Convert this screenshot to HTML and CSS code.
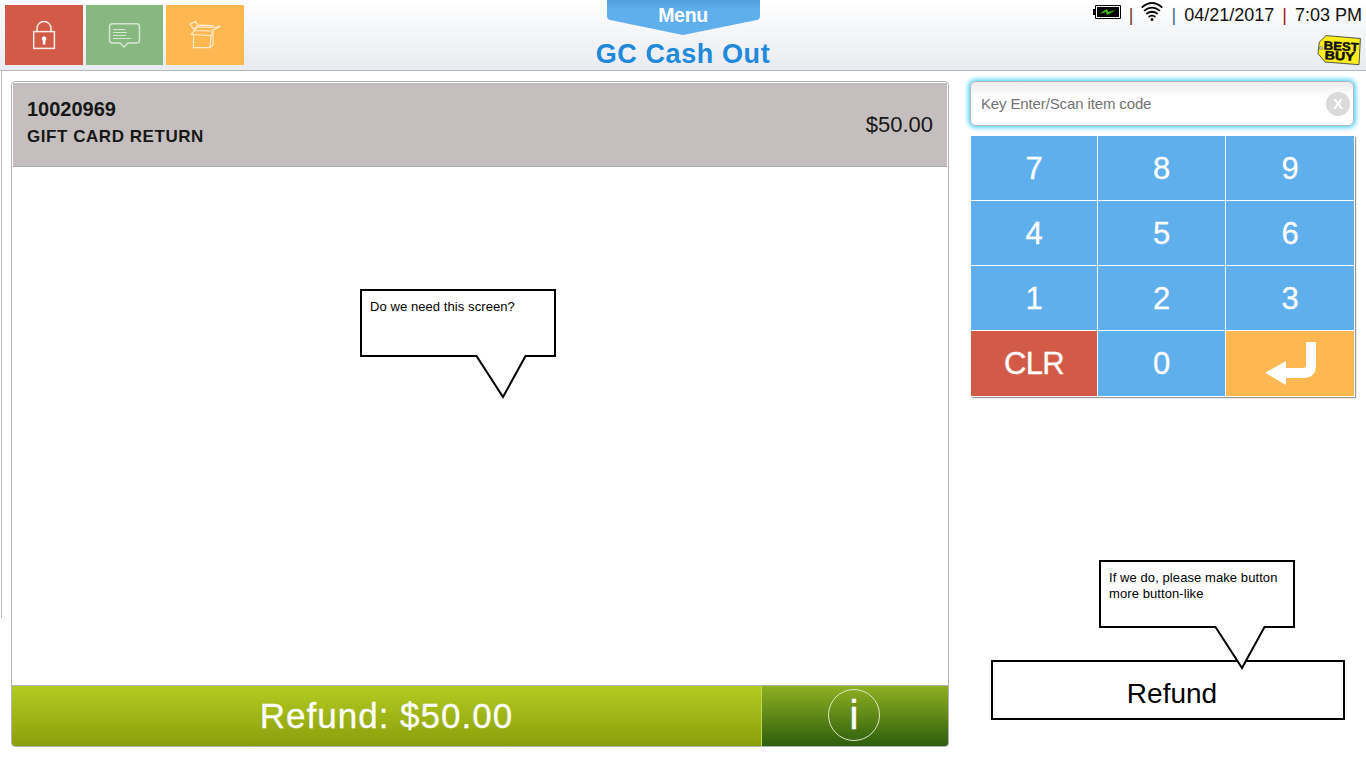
FILE: index.html
```html
<!DOCTYPE html>
<html lang="en">
<head>
<meta charset="utf-8">
<title>GC Cash Out</title>
<link rel="stylesheet" href="styles.css">
</head>
<body>
<header class="topbar">
  <nav class="tools">
    <button class="tool tool-lock" aria-label="Lock"><svg width="78" height="60" fill="none" stroke="#fff" stroke-opacity=".88"><rect x="28.700" y="26.600" width="20.700" height="16.800" stroke-width="1.500"/><path d="M32 26v-2.500a7 7 0 0 1 14 0V26" stroke-width="1.500"/><path d="M39 31.200a2.600 2.600 0 0 1 1.400 4.600V39.500h-2.600v-3.700a2.600 2.600 0 0 1 1.200-4.600z" fill="#fff" stroke="none"/></svg></button>
    <button class="tool tool-chat" aria-label="Messages"><svg width="77" height="60" fill="none" stroke="#fff" stroke-opacity=".65"><path d="M26.500 18.700h24q3 0 3 3V35q0 3-3 3H42l-4 4-4-4h-7.500q-3 0-3-3V21.700q0-3 3-3z" stroke-width="1.500"/><path d="M27 24.500h12M27 27.500h14M27 30.500h13M27 33.500h18"/></svg></button>
    <button class="tool tool-box" aria-label="Orders"><svg width="78" height="60" fill="none" stroke="#fff" stroke-opacity=".72" stroke-width="1.200"><path d="M27.700 30.500L27.300 42.700H44L47 40V24.500M44 42.700l1-12M25 29.500l3.500-4L46 26M25 29.500l20 1.200L47.500 24.500M24 19.300l5.500-3L32 21l-4.500 3zM28 25l5.500-4.800L48 20.700M33 22.200h14M47.500 25l6.800-3.700M47 23l7.500-2.200"/></svg></button>
  </nav>
  <div class="heading">
    <div class="menu"><svg class="menu-shape" width="153" height="35"><defs><linearGradient id="tab" x2="0" y2="1"><stop offset="0" stop-color="#539fde"/><stop offset=".28" stop-color="#60afed"/></linearGradient></defs><path d="M0 0h153v16q0 3-3 4L76 35 3 20q-3-1-3-4z" fill="url(#tab)"/></svg><span class="menu-label">Menu</span></div>
    <h1 class="title">GC Cash Out</h1>
  </div>
  <div class="status">
    <div class="status-line">
      <svg class="battery" width="28" height="14"><path d="M2.500.5h25v13h-25z" fill="#fff" stroke="#000"/><path d="M4 2h22v10H4zM0 4h3v6H0z"/><path d="M6 9l8-5 1 3 8-2-9 5-1-3z" fill="#4cc417"/></svg>
      <span class="bar bar-brown">|</span>
      <svg class="wifi" width="22" height="20" fill="none" stroke="#000" stroke-width="1.700"><path d="M.7 5.500q10.300-9 20.600 0M3 8.800q8-6.500 16 0M5.300 12q5.700-4.500 11.400 0M7.500 15q3.500-2.700 7 0"/><circle cx="11" cy="17.500" r="1.500" fill="#000" stroke="none"/></svg>
      <span class="bar bar-blue">|</span>
      <span class="date">04/21/2017</span>
      <span class="bar bar-red">|</span>
      <span class="time">7:03 PM</span>
    </div>
    <svg class="logo" width="44" height="31"><path d="M9 .6L43.400 3.500 42 29.700 8 27 1 18.500 2.300 7z" fill="#f9ed1c" stroke="#444" stroke-width=".9"/><circle cx="4" cy="13" r="1.400" fill="#fff" stroke="#555" stroke-width=".7"/><g class="logo-text" transform="rotate(3 24 15)"><text x="6.500" y="15.500" textLength="35" lengthAdjust="spacingAndGlyphs">BEST</text><text x="8" y="25" textLength="30" lengthAdjust="spacingAndGlyphs">BUY</text></g></svg>
  </div>
</header>
<main class="content">
  <section class="ticket">
    <div class="item">
      <div class="item-info"><div class="item-code">10020969</div><div class="item-name">GIFT CARD RETURN</div></div>
      <div class="item-price">$50.00</div>
    </div>
    <div class="ticket-body"></div>
    <footer class="total">
      <div class="total-label"><span>Refund: $50.00</span></div>
      <button class="info" aria-label="Information"><span class="info-ring">i</span></button>
    </footer>
  </section>
  <aside class="side">
    <div class="entry"><span class="entry-hint">Key Enter/Scan item code</span><span class="entry-clear">X</span></div>
    <div class="keypad">
      <button class="key">7</button><button class="key">8</button><button class="key">9</button>
      <button class="key">4</button><button class="key">5</button><button class="key">6</button>
      <button class="key">1</button><button class="key">2</button><button class="key">3</button>
      <button class="key key-clear">CLR</button><button class="key key-zero">0</button>
      <button class="key key-enter" aria-label="Enter"><svg width="51" height="43"><path d="M41 0h10v23q0 13-13 13H21v7L0 30.800 21 19v7h17q3 0 3-3z" fill="#fff"/></svg></button>
    </div>
    <button class="refund">Refund</button>
  </aside>
</main>
<div class="note note-screen"><svg class="note-shape" width="198" height="112"><path d="M1 1h194v66h-29.500L143 108l-26.500-41H1z"/></svg><p class="note-text">Do we need this screen?</p></div>
<div class="note note-button"><svg class="note-shape" width="198" height="112"><path d="M1 1h194v66h-29.500L143 108l-26.500-41H1z"/></svg><p class="note-text">If we do, please make button more button-like</p></div>
</body>
</html>
```
FILE: styles.css
```css
* { box-sizing: border-box; }
body { margin: 0; width: 1366px; height: 768px; overflow: hidden; position: relative; background: #fff; color: #111; font-family: "Liberation Sans", Arial, sans-serif; }
button { border: 0; padding: 0; margin: 0; font: inherit; color: inherit; }
svg { display: block; }
.topbar { height: 71px; display: grid; grid-template-columns: 1fr 174px 1fr; background: linear-gradient(#fff, #e8ebef); border-bottom: 1px solid #b4b9c0; }
.tools { display: flex; gap: 3px; padding: 5px; }
.tool { height: 60px; }
.tool-lock { background: #d15b47; }
.tool-chat { background: #87b87f; }
.tool-box { background: #ffb752; }
.heading { display: flex; flex-direction: column; align-items: center; }
.menu { display: grid; width: 153px; height: 35px; }
.menu-shape, .menu-label { grid-area: 1 / 1; }
.menu-label { color: #fff; font-size: 19.5px; line-height: 30px; letter-spacing: -.3px; font-weight: bold; text-align: center; }
.title { margin: 3px 0 0; font-size: 27px; line-height: 33px; letter-spacing: .6px; color: #2089da; white-space: nowrap; }
.status { display: flex; flex-direction: column; align-items: flex-end; padding: 0 4px 0 0; }
.status-line { display: flex; align-items: flex-start; height: 35px; font-size: 18px; line-height: 30px; white-space: nowrap; }
.battery { margin: 5px 8px 0 0; }
.wifi { margin: 2px 8px 0 8px; }
.bar-brown { color: #6b3a16; }
.bar-blue { color: #356d91; }
.bar-red { color: #9c1717; }
.date { margin: 0 8px 0 8px; }
.time { margin-left: 8px; }
.logo { margin-right: 1px; }
.logo-text { font-size: 12px; font-weight: bold; fill: #111; stroke: #111; stroke-width: .5px; }
.content { display: flex; border-left: 1px solid #b4b9c0; margin-left: 1px; height: 547px; }
.ticket { flex: none; width: 938px; height: 666px; margin: 10px 0 0 9px; display: flex; flex-direction: column; border: 1px solid #b3b3b3; border-radius: 4px; overflow: hidden; }
.item { height: 84px; margin: 1px 1px 0; display: flex; justify-content: space-between; background: #c4bfbe; border-bottom: 1px solid #aaa; padding: 0 14px; color: #171717; }
.item-info { padding-top: 13px; font-weight: bold; }
.item-code { font-size: 20px; line-height: 27px; }
.item-name { font-size: 17px; line-height: 27px; letter-spacing: .55px; }
.item-price { font-size: 22px; line-height: 84px; }
.ticket-body { flex: 1; }
.total { height: 61px; display: flex; border-top: 1px solid #b3b3b3; color: #fff; }
.total-label { width: 750px; background: linear-gradient(#b3cc22, #8a9e0b); border-right: 1px solid #b9dc50; text-align: center; font-size: 35px; line-height: 60px; letter-spacing: 1px; -webkit-text-stroke: .3px #fff; }
.info { flex: 1; display: flex; justify-content: center; align-items: center; padding: 0 2px 2px 0; background: linear-gradient(#8fb022, #2d5e0c); }
.info-ring { width: 52px; height: 52px; border: 1px solid #dce8c8; border-radius: 50%; font-size: 40px; line-height: 50px; -webkit-text-stroke: .5px #fff; }
.side { display: flex; flex-direction: column; padding: 10px 0 0 21px; }
.entry { flex: none; width: 384px; height: 45px; display: flex; align-items: center; justify-content: space-between; padding: 0 3px 0 10px; border: 1px solid #b5b5b5; border-radius: 6px; background: linear-gradient(#ececec, #fff 35%); box-shadow: 0 0 4px 1.5px #5ad6ff; }
.entry-hint { font-size: 15px; letter-spacing: -.13px; color: #737373; }
.entry-clear { width: 24px; height: 24px; border-radius: 50%; background: #dadada; color: #fff; font-weight: bold; font-size: 15px; line-height: 24px; text-align: center; }
.keypad { flex: none; width: 384px; height: 261px; margin: 10px 0 0 1px; display: grid; grid-template-columns: 126px 127px 128px; grid-template-rows: 64px 64px 64px 65px; gap: 1px; background: #fff; box-shadow: 1px 1px 1px #999; }
.key { padding-top: 2px; background: #60afed; color: #fff; font-size: 31px; -webkit-text-stroke: .3px #fff; }
.key-clear { padding-top: 0; background: #d15b47; letter-spacing: -.6px; }
.key-zero { padding-top: 0; }
.key-enter { padding-top: 0; background: #ffb752; display: flex; align-items: center; justify-content: center; }
.refund { flex: none; width: 354px; height: 60px; margin: 263px 0 0 21px; border: 2px solid #000; background: #fff; font-size: 28px; padding: 8px 0 0 8px; color: #000; }
.note { position: absolute; width: 196px; height: 112px; display: grid; }
.note-screen { left: 360px; top: 289px; }
.note-button { left: 1099px; top: 560px; }
.note-shape, .note-text { grid-area: 1 / 1; }
.note-shape path { fill: #fff; stroke: #000; stroke-width: 2; }
.note-text { position: relative; margin: 10px; font-size: 13px; line-height: 16px; letter-spacing: .08px; width: 178px; color: #000; }
```
